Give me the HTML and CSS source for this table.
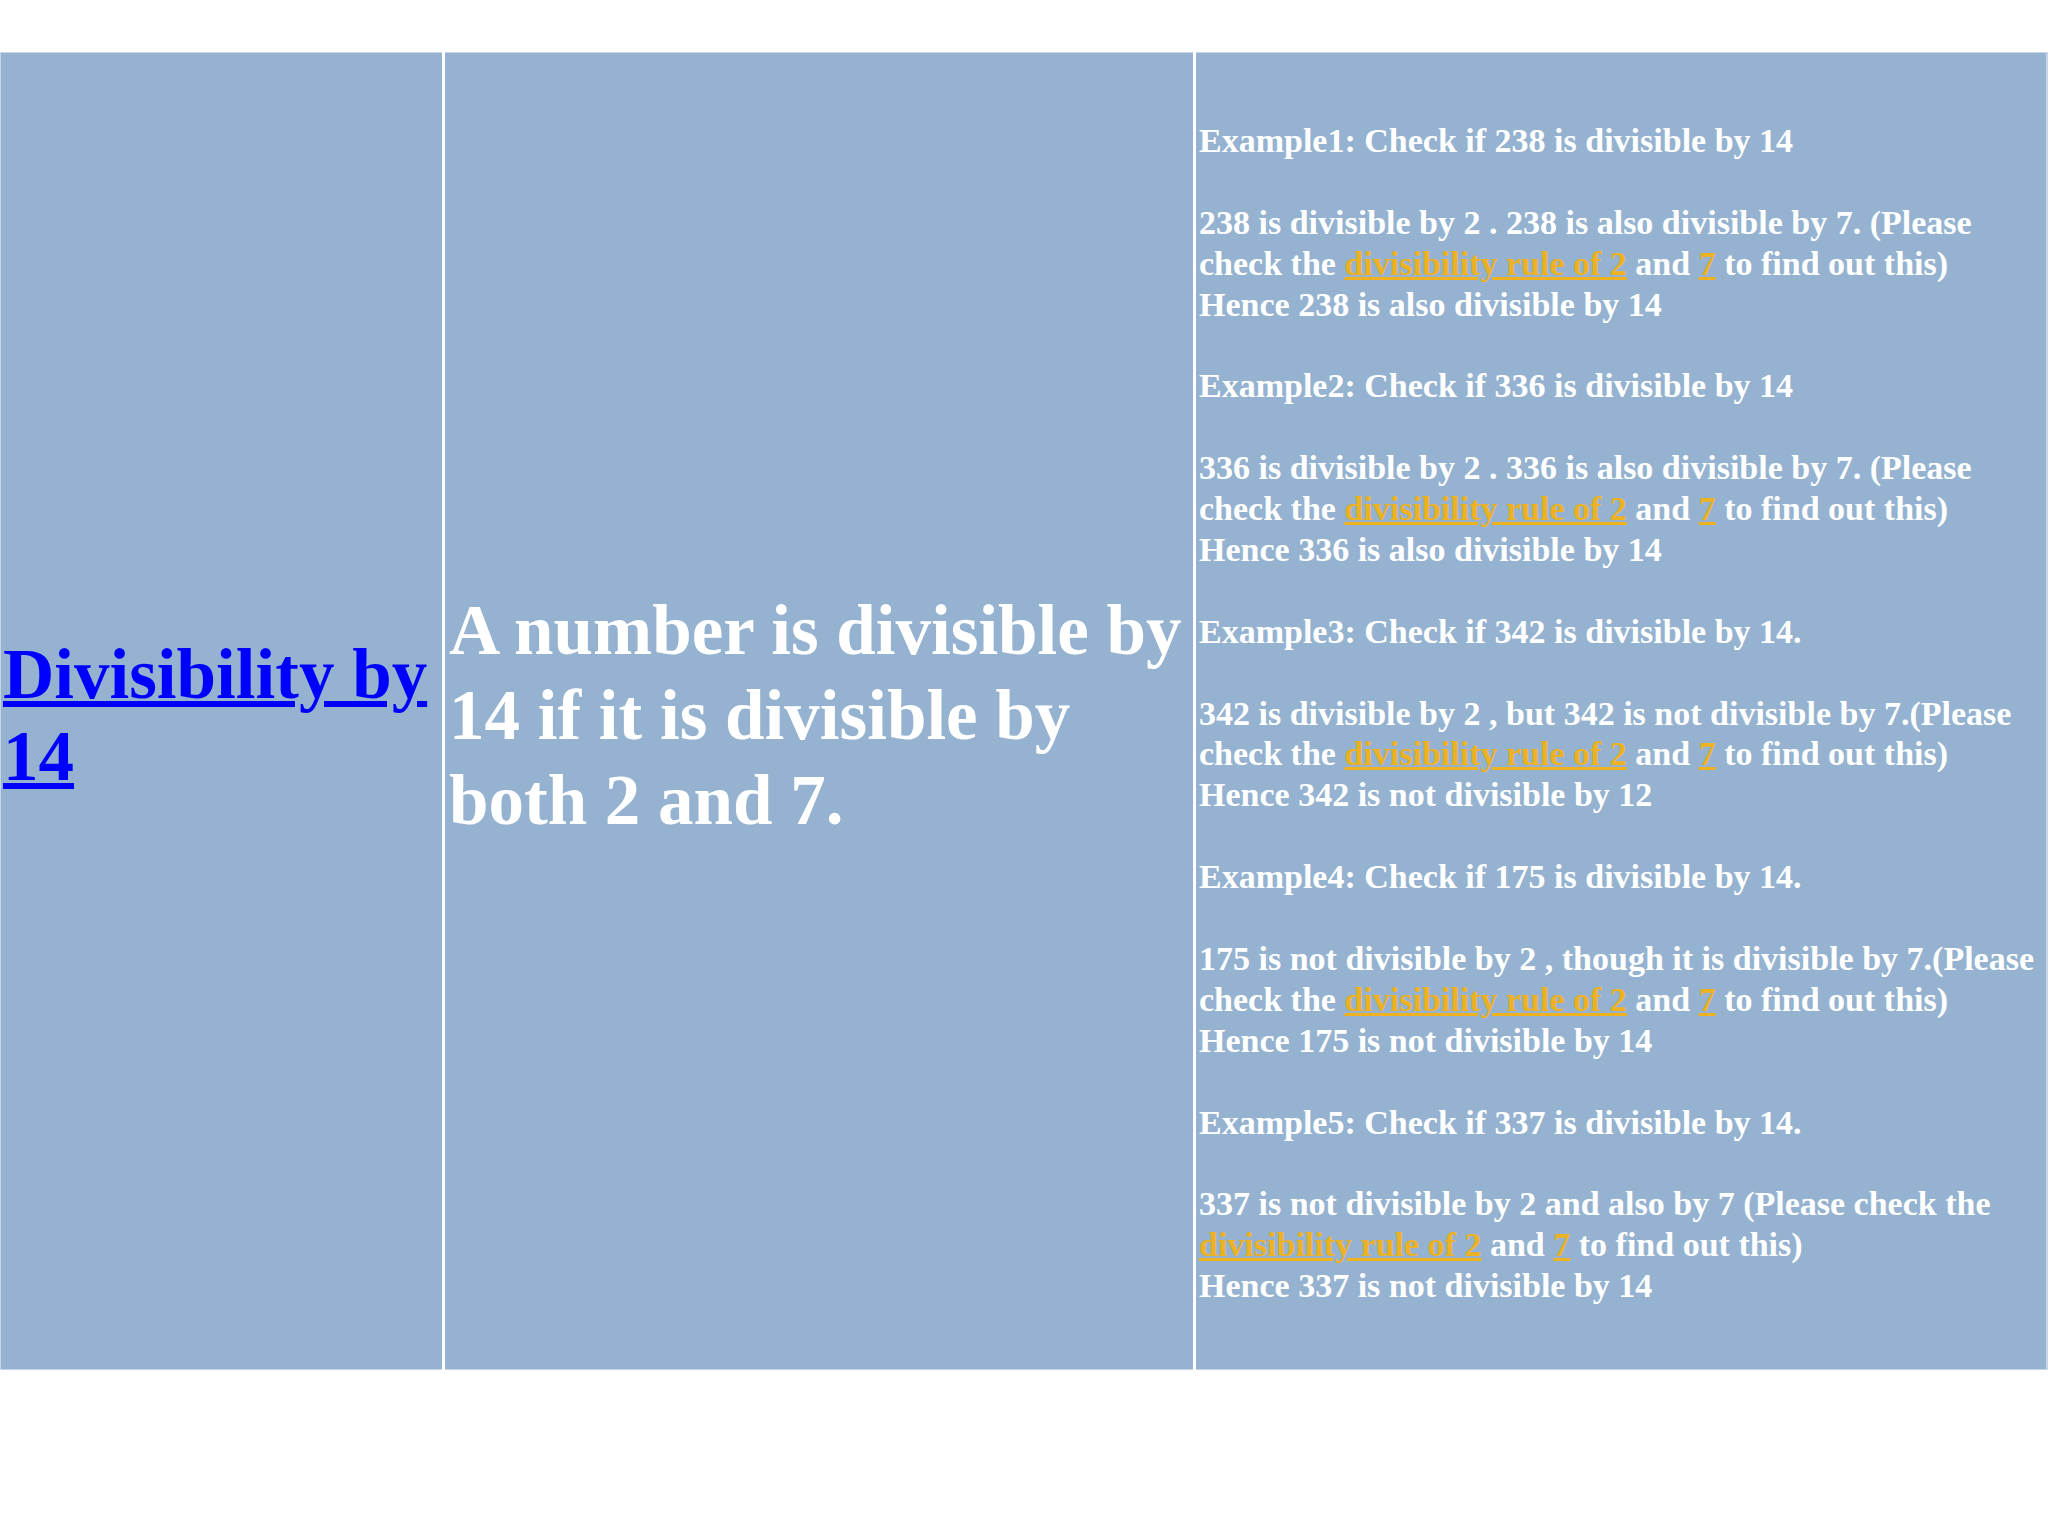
FILE: index.html
```html
<!DOCTYPE html>
<html>
<head>
<meta charset="utf-8">
<title>Divisibility by 14</title>
<link rel="stylesheet" href="styles.css">
</head>
<body>
<div class="page">
  <table class="rules">
    <tr>
      <td class="c-name"><a class="title-link" href="#">Divisibility by<br>14</a></td>
      <td class="c-rule">A number is divisible by<br>14 if it is divisible by<br>both 2 and 7.</td>
      <td class="c-ex">
        <p>Example1: Check if 238 is divisible by 14</p>
        <p>238 is divisible by 2 . 238 is also divisible by 7. (Please<br>check the <a class="rule-link" href="#">divisibility rule of 2</a> and <a class="rule-link" href="#">7</a> to find out this)<br>Hence 238 is also divisible by 14</p>
        <p>Example2: Check if 336 is divisible by 14</p>
        <p>336 is divisible by 2 . 336 is also divisible by 7. (Please<br>check the <a class="rule-link" href="#">divisibility rule of 2</a> and <a class="rule-link" href="#">7</a> to find out this)<br>Hence 336 is also divisible by 14</p>
        <p>Example3: Check if 342 is divisible by 14.</p>
        <p>342 is divisible by 2 , but 342 is not divisible by 7.(Please<br>check the <a class="rule-link" href="#">divisibility rule of 2</a> and <a class="rule-link" href="#">7</a> to find out this)<br>Hence 342 is not divisible by 12</p>
        <p>Example4: Check if 175 is divisible by 14.</p>
        <p>175 is not divisible by 2 , though it is divisible by 7.(Please<br>check the <a class="rule-link" href="#">divisibility rule of 2</a> and <a class="rule-link" href="#">7</a> to find out this)<br>Hence 175 is not divisible by 14</p>
        <p>Example5: Check if 337 is divisible by 14.</p>
        <p>337 is not divisible by 2 and also by 7 (Please check the<br><a class="rule-link" href="#">divisibility rule of 2</a> and <a class="rule-link" href="#">7</a> to find out this)<br>Hence 337 is not divisible by 14</p>
      </td>
    </tr>
  </table>
</div>
</body>
</html>
```
FILE: styles.css
```css
html, body {
  margin: 0;
  padding: 0;
  background: #ffffff;
}
.page {
  padding-top: 52px;
  font-family: "Liberation Serif", "Times New Roman", serif;
  font-weight: bold;
}
.rules {
  width: 2048px;
  height: 1318px;
  border-collapse: collapse;
  table-layout: fixed;
  background: #95b3d0;
  box-shadow: inset 0 0 0 1px #c6d6e6;
}
.rules td {
  padding: 8px 0 0 0;
  vertical-align: middle;
  white-space: nowrap;
  color: #ffffff;
}
.c-name {
  width: 439px;
  padding-left: 2px !important;
  border-left: 1px solid #c6d6e6;
  border-right: 3px solid #ffffff;
}
.c-rule {
  width: 744px;
  padding-left: 4px !important;
  border-right: 3px solid #ffffff;
  font-size: 71px;
  line-height: 85px;
}
.c-ex {
  padding-left: 3px !important;
  padding-top: 6px !important;
  font-size: 34px;
  line-height: 40.9px;
  border-right: 2px solid #c6d6e6;
}
.c-ex p {
  margin: 0 0 40.9px 0;
}
.c-ex p:last-child {
  margin-bottom: 0;
}
.title-link {
  color: #0000ff;
  font-size: 71px;
  line-height: 82px;
  text-decoration: underline;
  text-decoration-thickness: 6px;
}
.rule-link {
  color: #eeb11f;
  text-decoration: underline;
  text-decoration-thickness: 3px;
}
```
